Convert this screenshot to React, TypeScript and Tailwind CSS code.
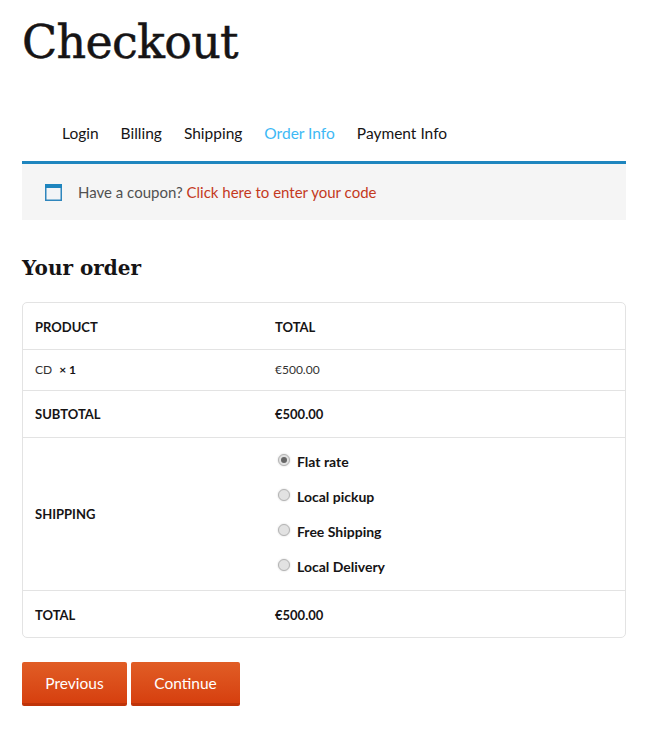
const sans = "font-['Lato','Noto_Sans',sans-serif]";

function Radio({ label, checked }: { label: string; checked?: boolean }) {
  return (
    <div className="flex h-[35px] items-center pl-[3px]">
      <span className="mb-[2px] flex h-3 w-3 items-center justify-center rounded-full border border-[#b4b4b4] bg-[#e2e2e2] shadow-[0_0_2px_#cfcfcf]">
        {checked && <span className="h-1.5 w-1.5 rounded-full bg-[#666]" />}
      </span>
      <span className="ml-[7px] text-[14px] font-bold text-[#161415]">{label}</span>
    </div>
  );
}

function Button({ label, width }: { label: string; width: string }) {
  return (
    <button className={`h-[44px] ${width} rounded-[2px] border-b-[3px] border-[#bf3409] bg-gradient-to-b from-[#e15d25] to-[#d63f0e] pt-[3px] text-[15.5px] text-[#fff]`}>
      {label}
    </button>
  );
}

function Head({ children, wide }: { children: string; wide?: boolean }) {
  return <th className={`${wide ? "w-[240px] " : ""}pt-[3px] pl-3 text-left font-bold`}>{children}</th>;
}

export default function App() {
  return (
    <div className={`${sans} min-h-[749px] bg-white px-[22px] text-[#161415]`}>
      <h1 className="pt-[12px] font-['DejaVu_Serif',serif] text-[46px] leading-[60px] font-normal tracking-[-0.7px] text-[#161415] [-webkit-text-stroke:0.5px_#161415]">Checkout</h1>
      <nav className="mt-[46px] flex h-[43px] items-center gap-[22px] pb-[12px] pl-10 text-[15.5px]">
        <span>Login</span>
        <span>Billing</span>
        <span>Shipping</span>
        <span className="text-[#3db9f5]">Order Info</span>
        <span>Payment Info</span>
      </nav>
      <div className="flex h-[59px] items-center border-t-[3px] border-[#1e85be] bg-[#f5f5f5] pl-[23px] text-[15px]">
        <svg width="17" height="17" viewBox="0 0 17 17" className="shrink-0">
          <rect x="0.75" y="0.75" width="15.5" height="15.5" fill="#f2f4f7" stroke="#2f86bd" strokeWidth="1.5" />
          <rect x="0" y="0" width="17" height="4" fill="#1e85be" />
        </svg>
        <span className="ml-4 text-[#515151]">Have a coupon? <span className="text-[#c4391d]">Click here to enter your code</span></span>
      </div>
      <h2 className="mt-[31px] h-[34px] font-['DejaVu_Serif',serif] text-[20px] leading-[34px] font-bold">Your order</h2>
      <div className="mt-[17px] overflow-hidden rounded-[5px] border border-[#e3e3e3]">
        <table className="w-full border-collapse text-[13px]">
          <tbody>
            <tr className="h-[46px] border-b border-[#e3e3e3]">
              <Head wide>PRODUCT</Head>
              <Head>TOTAL</Head>
            </tr>
            <tr className="h-[41px] border-b border-[#e3e3e3] text-[12px] text-[#333]">
              <td className="pl-3">CD <strong className="ml-1 text-[#161415]">× 1</strong></td>
              <td className="pl-3">€500.00</td>
            </tr>
            <tr className="h-[47px] border-b border-[#e3e3e3]">
              <Head>SUBTOTAL</Head>
              <Head>€500.00</Head>
            </tr>
            <tr className="h-[153px] border-b border-[#e3e3e3]">
              <Head>SHIPPING</Head>
              <td className="pl-3">
                <Radio label="Flat rate" checked />
                <Radio label="Local pickup" />
                <Radio label="Free Shipping" />
                <Radio label="Local Delivery" />
              </td>
            </tr>
            <tr className="h-[47px]">
              <Head>TOTAL</Head>
              <Head>€500.00</Head>
            </tr>
          </tbody>
        </table>
      </div>
      <div className="mt-6 flex gap-1">
        <Button label="Previous" width="w-[105px]" />
        <Button label="Continue" width="w-[109px]" />
      </div>
    </div>
  );
}
